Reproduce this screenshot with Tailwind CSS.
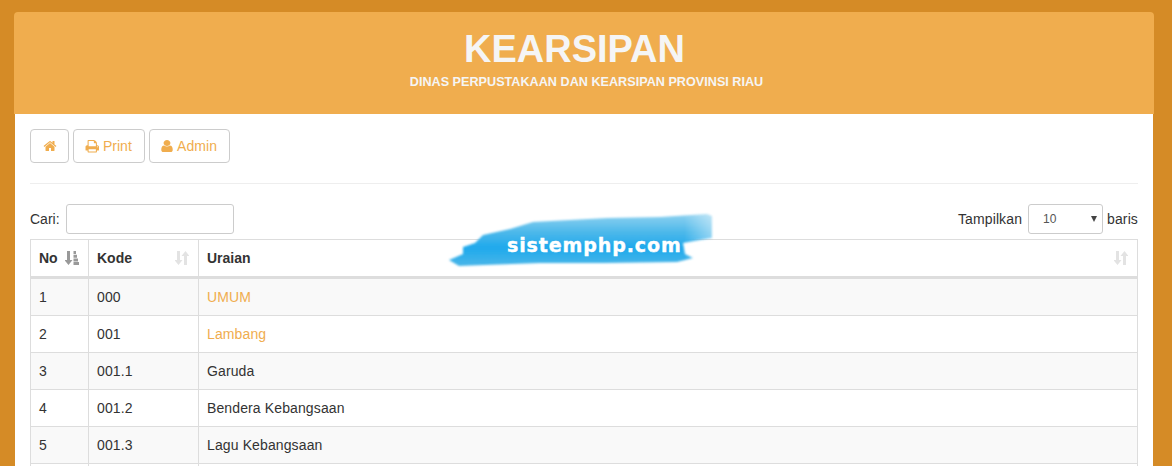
<!DOCTYPE html>
<html lang="id">
<head>
    <meta charset="UTF-8">
    <meta name="viewport" content="width=device-width, initial-scale=1.0">
    <title>Kearsipan</title>
    <script src="https://cdn.jsdelivr.net/npm/@tailwindcss/browser@4"></script>
</head>
<body class="bg-[#d58b26] font-['Liberation_Sans',Arial,sans-serif] text-[14px] leading-[20px] text-[#333]">
    <div class="relative h-[466px] overflow-hidden pt-[12px] pr-[18px] pl-[14px]">
        <div class="rounded-t-[4px]">
            <header class="h-[102px] rounded-t-[4px] bg-[#f0ad4e] pt-[16px] text-center text-[#f5f5f5]">
                <h1 class="mr-[19px] text-[38px] leading-[42px] font-bold">KEARSIPAN</h1>
                <p class="mt-[4px] ml-[5px] text-[12.65px] leading-[17px] font-bold">DINAS PERPUSTAKAAN DAN KEARSIPAN PROVINSI RIAU</p>
            </header>

            <main class="mx-[1px] bg-white px-[15px] pt-[15px] pb-[20px]">
                <nav class="flex gap-[4px] text-[#f0ad4e]">
                    <a href="#" class="flex h-[34px] w-[39px] items-center justify-center rounded-[4px] border border-[#ccc]">
                        <svg class="h-[14px] w-[14px] fill-current" viewBox="0 0 1792 1792"><path d="M1472 992v480q0 26-19 45t-45 19h-384v-384h-256v384h-384q-26 0-45-19t-19-45v-480q0-1 .5-3t.5-3l575-474 575 474q1 2 1 6zm223-69l-62 74q-8 9-21 11h-3q-13 0-21-7l-692-577-692 577q-12 8-24 7-13-2-21-11l-62-74q-8-10-7-23.5t11-21.5l719-599q32-26 76-26t76 26l244 204v-195q0-14 9-23t23-9h192q14 0 23 9t9 23v408l219 182q10 8 11 21.5t-7 23.5z"/></svg>
                    </a>
                    <a href="#" class="flex h-[34px] w-[72px] items-center gap-[3.75px] rounded-[4px] border border-[#ccc] pl-[10.75px]">
                        <svg class="h-[14.5px] w-[14.5px] fill-current" viewBox="0 0 1792 1792"><path d="M448 1536h896v-256h-896v256zm0-640h896v-384h-160q-40 0-68-28t-28-68v-160h-640v640zm1152 64q0-26-19-45t-45-19-45 19-19 45 19 45 45 19 45-19 19-45zm128 0v416q0 13-9.500 22.500t-22.500 9.500h-224v160q0 40-28 68t-68 28h-960q-40 0-68-28t-28-68v-160h-224q-13 0-22.500-9.500t-9.500-22.500v-416q0-79 56.500-135.500t135.500-56.500h64v-544q0-40 28-68t68-28h672q40 0 88 20t76 48l152 152q28 28 48 76t20 88v256h64q79 0 135.500 56.500t56.500 135.500z"/></svg>
                        Print
                    </a>
                    <a href="#" class="flex h-[34px] w-[81px] items-center gap-[2px] rounded-[4px] border border-[#ccc] pl-[9px] tracking-[0.1px]">
                        <svg class="h-[14px] w-[16px] fill-current" viewBox="0 0 1792 1792" preserveAspectRatio="none"><path d="M1536 1399q0 109-62.500 187t-150.500 78h-854q-88 0-150.500-78t-62.500-187q0-85 8.500-160.500t31.500-152 58.500-131 94-89 134.500-34.500q131 128 313 128t313-128q76 0 134.500 34.500t94 89 58.500 131 31.500 152 8.500 160.500zm-256-887q0 159-112.500 271.500t-271.500 112.500-271.500-112.500-112.500-271.500 112.500-271.500 271.500-112.500 271.500 112.500 112.500 271.500z"/></svg>
                        Admin
                    </a>
                </nav>

                <hr class="mt-[20px] border-[#eee]">

                <div class="mt-[20px] flex h-[30px] items-center justify-between">
                    <label class="flex items-center gap-[6px]">Cari:
                        <input type="text" class="h-[30px] w-[168px] rounded-[3px] border border-[#ccc] bg-white px-[10px] text-[12px]">
                    </label>
                    <label class="flex items-center gap-[4px] tracking-[0.12px]">Tampilkan
                        <span class="relative ml-[2px] block">
                            <select class="block h-[30px] w-[75px] appearance-none rounded-[3px] border border-[#ccc] bg-white pl-[14px] text-[12px] text-[#555]">
                                <option>10</option>
                            </select>
                            <svg class="absolute top-[12px] right-[6.5px] h-[6px] w-[6px] fill-[#444]" viewBox="0 0 6 6"><path d="M0 0h6L3 6z"/></svg>
                        </span>
                        baris
                    </label>
                </div>

                <table class="mt-[5px] w-full table-fixed border-collapse border border-[#ddd]">
                    <thead>
                        <tr class="h-[38px] border-b-[3px] border-[#ddd] text-left font-bold">
                            <th class="w-[58px] border-r border-[#ddd] px-[8px]">
                                <div class="flex items-center justify-between">No
                                    <svg class="mr-[1px] -ml-[1px] h-[14px] w-[14px] fill-[#999]" viewBox="0 0 14 14"><path d="M2 0h3v9h2.500L3.500 14-.5 9H2zM8.500 0h2.500v3H8.500zM8.500 3.700h3.500v3H8.500zM8.500 7.400h4.500v3H8.500zM8.500 11h5.500v3H8.500z"/></svg>
                                </div>
                            </th>
                            <th class="w-[110px] border-r border-[#ddd] px-[8px]">
                                <div class="flex items-center justify-between">Kode
                                    <svg class="mr-[1px] h-[14px] w-[14px] fill-[#e3e3e3]" viewBox="0 0 14 14"><path d="M2 0h3v9h2.500L3.500 14-.5 9H2zM9 5H6.500L10.500 0l4 5H12v9H9z"/></svg>
                                </div>
                            </th>
                            <th class="px-[8px]">
                                <div class="flex items-center justify-between">Uraian
                                    <svg class="mr-[1px] h-[14px] w-[14px] fill-[#e3e3e3]" viewBox="0 0 14 14"><path d="M2 0h3v9h2.500L3.500 14-.5 9H2zM9 5H6.500L10.500 0l4 5H12v9H9z"/></svg>
                                </div>
                            </th>
                        </tr>
                    </thead>
                    <tbody class="tracking-[0.12px]">
                        <tr class="h-[38px] border-b border-[#ddd] bg-[#f9f9f9]"><td class="border-r border-[#ddd] px-[8px]">1</td><td class="border-r border-[#ddd] px-[8px]">000</td><td class="px-[8px] text-[#f0ad4e]">UMUM</td></tr>
                        <tr class="h-[37px] border-b border-[#ddd]"><td class="border-r border-[#ddd] px-[8px]">2</td><td class="border-r border-[#ddd] px-[8px]">001</td><td class="px-[8px] text-[#f0ad4e]">Lambang</td></tr>
                        <tr class="h-[37px] border-b border-[#ddd] bg-[#f9f9f9]"><td class="border-r border-[#ddd] px-[8px]">3</td><td class="border-r border-[#ddd] px-[8px]">001.1</td><td class="px-[8px]">Garuda</td></tr>
                        <tr class="h-[37px] border-b border-[#ddd]"><td class="border-r border-[#ddd] px-[8px]">4</td><td class="border-r border-[#ddd] px-[8px]">001.2</td><td class="px-[8px]">Bendera Kebangsaan</td></tr>
                        <tr class="h-[37px] border-b border-[#ddd] bg-[#f9f9f9]"><td class="border-r border-[#ddd] px-[8px]">5</td><td class="border-r border-[#ddd] px-[8px]">001.3</td><td class="px-[8px]">Lagu Kebangsaan</td></tr>
                        <tr class="h-[37px]"><td class="border-r border-[#ddd] px-[8px]"></td><td class="border-r border-[#ddd] px-[8px]"></td><td class="px-[8px]"></td></tr>
                    </tbody>
                </table>
            </main>
        </div>

        <!-- watermark -->
        <div class="absolute top-[210px] left-[445px] h-[62px] w-[272px]">
            <svg class="absolute inset-0 h-full w-full" viewBox="0 0 272 62">
                <defs>
                    <filter id="brush" x="-5%" y="-20%" width="110%" height="140%"><feGaussianBlur stdDeviation="1"/></filter>
                    <linearGradient id="ink" x1="0" y1="0" x2="0" y2="1">
                        <stop offset="0" stop-color="#8fd2f0"/>
                        <stop offset="0.35" stop-color="#4db8ea"/>
                        <stop offset="0.65" stop-color="#1fa9ec"/>
                        <stop offset="1" stop-color="#4ab6e8"/>
                    </linearGradient>
                    <linearGradient id="fade" x1="0" y1="0" x2="1" y2="0">
                        <stop offset="0.88" stop-color="#fff"/>
                        <stop offset="0.985" stop-color="#fff" stop-opacity="0.55"/>
                    </linearGradient>
                    <mask id="end"><rect width="272" height="62" fill="url(#fade)"/></mask>
                </defs>
                <g mask="url(#end)">
                    <path filter="url(#brush)" fill="url(#ink)" d="M4 50 18 44 18 37 30 33 38 25 65 19 88 12 125 10 162 8 215 7 262 4 267 6 267 28 238 33 240 44 248 48 232 52 160 53 95 53 40 55 14 56z"/>
                </g>
            </svg>
            <span class="absolute top-[24px] left-[62px] font-['DejaVu_Sans',sans-serif] text-[19px] leading-[22px] font-bold tracking-[0.9px] whitespace-nowrap text-white [-webkit-text-stroke:0.4px_white]">sistemphp.com</span>
        </div>
    </div>
</body>
</html>
